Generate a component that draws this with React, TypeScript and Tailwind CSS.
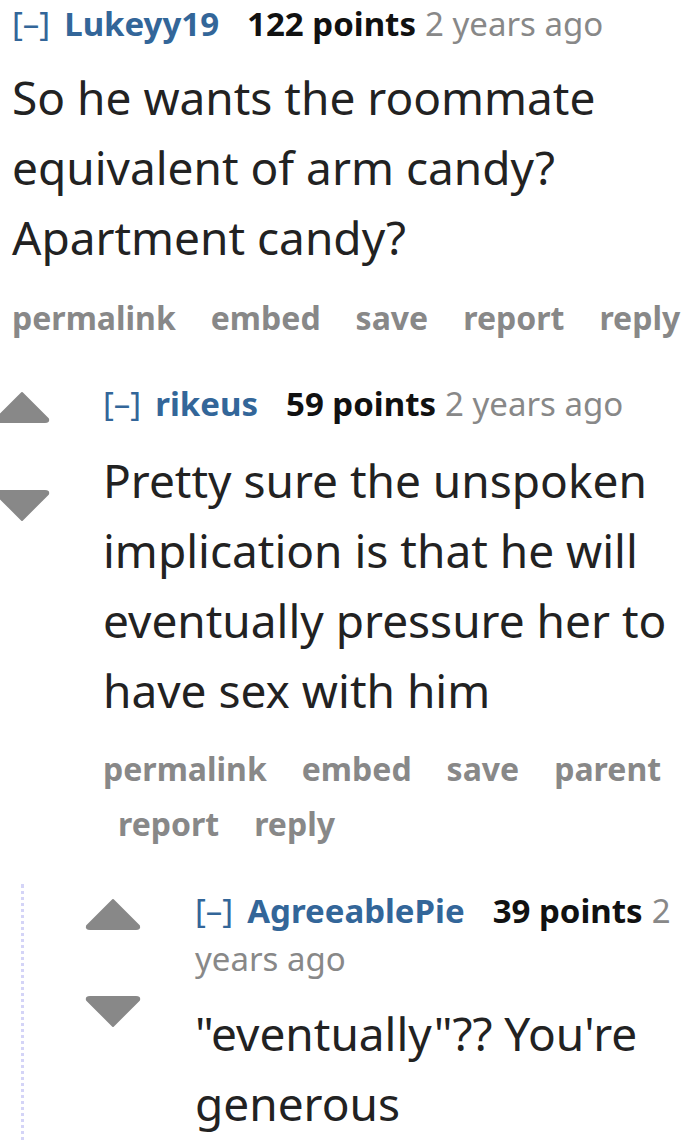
import React from 'react';

type Comment = {
  author: string;
  points: number;
  age: string;
  body: string;
  buttons: string[];
};

const ArrowUp = () => (
  <svg width="56" height="32" viewBox="0 0 56 32" className="block">
    <path d="M28 2 L54 28 Q55 31 51 31 L5 31 Q1 31 2 28 Z" fill="#888888" stroke="#888888" strokeWidth="2" strokeLinejoin="round" />
  </svg>
);

const ArrowDown = () => (
  <svg width="56" height="32" viewBox="0 0 56 32" className="block">
    <path d="M28 30 L54 4 Q55 1 51 1 L5 1 Q1 1 2 4 Z" fill="#888888" stroke="#888888" strokeWidth="2" strokeLinejoin="round" />
  </svg>
);

function Tagline({ c }: { c: Comment }) {
  return (
    <p className="text-[33px] leading-[48px] text-[#888]">
      <span className="text-[#369] mr-[14px]">[–]</span>
      <span className="font-bold text-[#336699] mr-[28px]">{c.author}</span>
      <span className="font-bold text-[#111] mr-[9px]">{c.points} points</span>
      <span>{c.age}</span>
    </p>
  );
}

function Buttons({ items }: { items: string[] }) {
  return (
    <ul className="flex flex-wrap gap-y-[6px] text-[32px] font-bold leading-[49px] text-[#888]">
      {items.map((b, i) => (
        <li key={b} className={i === 0 ? 'mr-[20px]' : 'pl-[15px] mr-[20px] last:mr-0'}>
          {b}
        </li>
      ))}
    </ul>
  );
}

const first: Comment = {
  author: 'Lukeyy19',
  points: 122,
  age: '2 years ago',
  body: 'So he wants the roommate equivalent of arm candy? Apartment candy?',
  buttons: ['permalink', 'embed', 'save', 'report', 'reply'],
};

const second: Comment = {
  author: 'rikeus',
  points: 59,
  age: '2 years ago',
  body: 'Pretty sure the unspoken implication is that he will eventually pressure her to have sex with him',
  buttons: ['permalink', 'embed', 'save', 'parent', 'report', 'reply'],
};

const third: Comment = {
  author: 'AgreeablePie',
  points: 39,
  age: '2 years ago',
  body: '"eventually"?? You\'re generous',
  buttons: [],
};

export default function App() {
  return (
    <div
      className="w-[700px] h-[1141px] overflow-hidden bg-white text-[#222]"
      style={{ fontFamily: '"Noto Sans", "Open Sans", sans-serif' }}
    >
      {/* top-level comment, arrows scrolled off */}
      <div className="pl-[12px] pr-[2px]">
        <Tagline c={first} />
        <div className="text-[46px] leading-[70px] mt-[14px]">{first.body}</div>
        <div className="mt-[21px]">
          <Buttons items={first.buttons} />
        </div>
      </div>

      {/* reply */}
      <div className="flex mt-[38px] -ml-[6px]">
        <div className="w-[56px] shrink-0 flex flex-col gap-[67px] pt-[11px]">
          <ArrowUp />
          <ArrowDown />
        </div>
        <div className="pl-[53px]">
          <Tagline c={second} />
          <div className="text-[46px] leading-[70px] mt-[17px] pr-[20px]">{second.body}</div>
          <div className="mt-[19px]">
            <Buttons items={second.buttons} />
          </div>
        </div>
      </div>

      {/* nested reply */}
      <div className="ml-[21px] mt-[36px] border-l-[3px] border-dotted border-[#d4d4f7] flex pl-[61px] pb-[40px]">
        <div className="w-[56px] shrink-0 flex flex-col gap-[66px] pt-[14px]">
          <ArrowUp />
          <ArrowDown />
        </div>
        <div className="pl-[54px] pr-[8px] pt-[3px]">
          <Tagline c={third} />
          <div className="text-[46px] leading-[70px] mt-[15px]">{third.body}</div>
        </div>
      </div>
    </div>
  );
}
